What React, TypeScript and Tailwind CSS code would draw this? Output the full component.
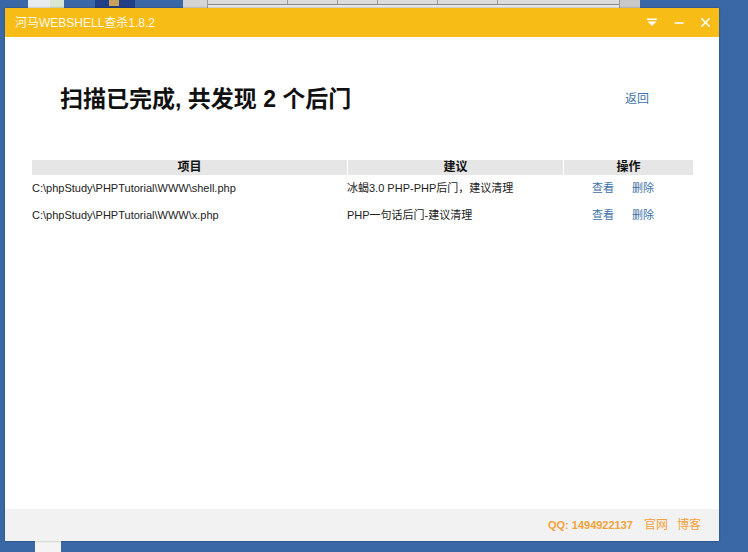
import { Minus, X } from "lucide-react";

const font = { fontFamily: '"Liberation Sans", Arial, "Noto Sans CJK SC", sans-serif' };

const rows = [
  { path: "C:\\phpStudy\\PHPTutorial\\WWW\\shell.php", advice: "冰蝎3.0 PHP-PHP后门，建议清理" },
  { path: "C:\\phpStudy\\PHPTutorial\\WWW\\x.php", advice: "PHP一句话后门-建议清理" },
];

function Desktop() {
  return (
    <>
      {/* bits of the desktop peeking out above the window */}
      <div className="absolute left-[28px] top-0 w-[22px] h-[8px] bg-[#e8ecef]" />
      <div className="absolute left-[50px] top-0 w-[14px] h-[8px] bg-[#d9e6d4]" />
      <div className="absolute left-[95px] top-0 w-[40px] h-[8px] bg-[#223e86]">
        <div className="ml-[14px] w-[10px] h-[6px] bg-[#c9a15a]" />
      </div>
      <div className="absolute left-[183px] top-0 w-[24px] h-[8px] bg-[#d4d4d4]" />
      <div className="absolute left-[207px] top-0 w-[413px] h-[8px] bg-[#e9e9e9] border-x border-[#9a9a9a]">
        <div className="flex h-[5px] border-b border-[#8a8a8a] bg-[#dcdcdc]">
          <div className="w-[80px] border-r border-[#9a9a9a]" />
          <div className="w-[50px] border-r border-[#9a9a9a]" />
          <div className="w-[40px] border-r border-[#9a9a9a]" />
          <div className="w-[60px] border-r border-[#9a9a9a]" />
          <div className="w-[60px] border-r border-[#9a9a9a]" />
        </div>
      </div>
      <div className="absolute left-[620px] top-0 w-[20px] h-[8px] bg-[#c8c8c8]" />
      <div className="absolute left-[35px] top-[541px] w-[26px] h-[11px] bg-[#f4f4f4]" />
    </>
  );
}

export default function App() {
  return (
    <div className="relative w-[748px] h-[552px] overflow-hidden bg-[#3a68a6]" style={font}>
      <Desktop />

      <div className="absolute left-[5px] top-[8px] w-[714px] h-[533px] flex flex-col bg-white shadow-[0_0_2px_rgba(0,0,0,0.35)]">
        {/* Title bar */}
        <div className="h-[29px] bg-[#f8bc17] flex items-center pl-[10px] pr-[6px]">
          <span className="text-[12px] text-white/95">河马WEBSHELL查杀1.8.2</span>
          <div className="ml-auto flex items-center gap-[12px] text-white">
            <svg width="12" height="12" viewBox="0 0 12 12" className="mr-[2px]">
              <rect x="1" y="1.5" width="10" height="1.6" fill="white" />
              <path d="M1.5 4.5 H10.5 L6 9 Z" fill="white" />
            </svg>
            <Minus className="w-[14px] h-[14px]" strokeWidth={2.5} />
            <X className="w-[15px] h-[15px]" strokeWidth={2.5} />
          </div>
        </div>

        {/* Content */}
        <div className="flex-1 flex flex-col">
          <div className="flex items-center mt-[45px] pl-[55px] pr-[70px]">
            <h1 className="text-[23px] font-bold text-[#111]">
              扫描已完成, 共发现 2 个后门
            </h1>
            <a className="ml-auto text-[12px] text-[#3e72a8]">返回</a>
          </div>

          <div className="mt-[43px] ml-[27px] w-[661px] text-[11px] text-[#222]">
            <div className="grid grid-cols-[315px_216px_130px] h-[15px] leading-[15px] text-[12px] font-bold text-[#111]">
              <div className="bg-[#e6e6e6] text-center">项目</div>
              <div className="bg-[#e6e6e6] text-center border-l border-white">建议</div>
              <div className="bg-[#e6e6e6] text-center border-l border-white">操作</div>
            </div>
            {rows.map((r) => (
              <div key={r.path} className="grid grid-cols-[315px_216px_130px] h-[27px] items-center">
                <div>{r.path}</div>
                <div>{r.advice}</div>
                <div className="flex gap-[18px] pl-[29px] text-[#3e72a8]">
                  <a>查看</a>
                  <a>删除</a>
                </div>
              </div>
            ))}
          </div>
        </div>

        {/* Footer */}
        <div className="h-[32px] bg-[#f2f2f2] flex items-center justify-end gap-[9px] pr-[18px] text-[12px] text-[#f2a23a]">
          <span className="text-[11px] font-bold mr-[2px]">QQ: 1494922137</span>
          <span>官网</span>
          <span>博客</span>
        </div>
      </div>
    </div>
  );
}
